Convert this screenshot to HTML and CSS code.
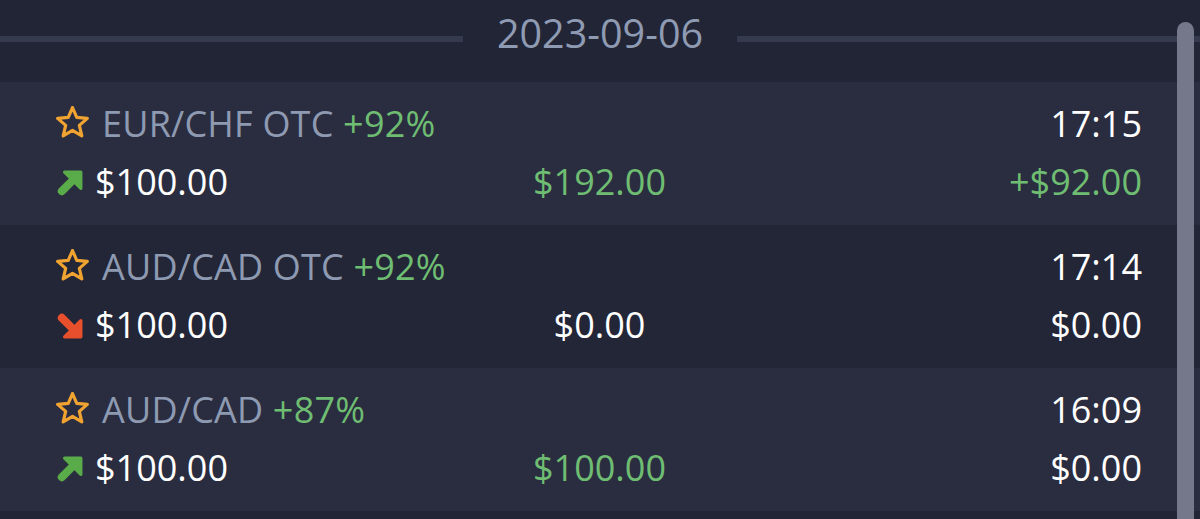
FILE: index.html
```html
<!DOCTYPE html>
<html>
<head>
<meta charset="utf-8">
<link rel="stylesheet" href="styles.css">
</head>
<body>
<div class="screen">
  <div class="date-head">
    <span class="rule"></span>
    <span class="date">2023-09-06</span>
    <span class="rule"></span>
  </div>

  <div class="trade light">
    <div class="line">
      <div class="name"><svg class="star" viewBox="2 2 28 27"><path d="M16 3.2 L19.6 11.6 L28.6 12.4 L21.8 18.4 L23.9 27.3 L16 22.6 L8.1 27.3 L10.2 18.4 L3.4 12.4 L12.4 11.6 Z"/></svg><span class="pair">EUR/CHF OTC</span> <span class="pct">+92%</span></div>
      <div></div>
      <div class="time">17:15</div>
    </div>
    <div class="line">
      <div class="amount"><svg class="dir up" viewBox="0 0 24 24"><path class="head" d="M7 2 H22 V17 Z"/><path class="shaft" d="M15 9 L4.5 19.5"/></svg>$100.00</div>
      <div class="mid green">$192.00</div>
      <div class="profit green">+$92.00</div>
    </div>
  </div>

  <div class="trade dark">
    <div class="line">
      <div class="name"><svg class="star" viewBox="2 2 28 27"><path d="M16 3.2 L19.6 11.6 L28.6 12.4 L21.8 18.4 L23.9 27.3 L16 22.6 L8.1 27.3 L10.2 18.4 L3.4 12.4 L12.4 11.6 Z"/></svg><span class="pair">AUD/CAD OTC</span> <span class="pct">+92%</span></div>
      <div></div>
      <div class="time">17:14</div>
    </div>
    <div class="line">
      <div class="amount"><svg class="dir down" viewBox="0 0 24 24"><path class="head" d="M7 22 H22 V7 Z"/><path class="shaft" d="M15 15 L4.5 4.5"/></svg>$100.00</div>
      <div class="mid">$0.00</div>
      <div class="profit">$0.00</div>
    </div>
  </div>

  <div class="trade light">
    <div class="line">
      <div class="name"><svg class="star" viewBox="2 2 28 27"><path d="M16 3.2 L19.6 11.6 L28.6 12.4 L21.8 18.4 L23.9 27.3 L16 22.6 L8.1 27.3 L10.2 18.4 L3.4 12.4 L12.4 11.6 Z"/></svg><span class="pair">AUD/CAD</span> <span class="pct">+87%</span></div>
      <div></div>
      <div class="time">16:09</div>
    </div>
    <div class="line">
      <div class="amount"><svg class="dir up" viewBox="0 0 24 24"><path class="head" d="M7 2 H22 V17 Z"/><path class="shaft" d="M15 9 L4.5 19.5"/></svg>$100.00</div>
      <div class="mid green">$100.00</div>
      <div class="profit">$0.00</div>
    </div>
  </div>

  <div class="scrollbar"></div>
</div>
</body>
</html>
```

FILE: styles.css
```css
* { box-sizing: border-box; }
html, body {
  margin: 0;
  padding: 0;
  background: #222535;
}
.screen {
  position: relative;
  width: 1200px;
  height: 519px;
  overflow: hidden;
  background: #222535;
  font-family: "Open Sans", "Noto Sans", sans-serif;
  color: #ffffff;
}
.date-head {
  height: 82px;
  display: flex;
  align-items: flex-start;
  gap: 34px;
  padding-top: 11px;
}
.rule {
  flex: 1;
  height: 6px;
  margin-top: 25px;
  background: #353a4e;
}
.date {
  font-size: 39.5px;
  line-height: 44px;
  color: #8f9bb3;
}
.trade {
  padding: 13px 58px 14px 57px;
}
.trade.light { background: #2a2d40; }
.trade.dark { background: #232637; }
.line {
  display: grid;
  grid-template-columns: 1fr 1fr 1fr;
  align-items: center;
  height: 58px;
  font-size: 36px;
  line-height: 58px;
  white-space: nowrap;
}
.name {
  white-space: nowrap;
  letter-spacing: 0.2px;
}
.star {
  display: inline-block;
  vertical-align: middle;
  width: 33px;
  height: 32px;
  margin-left: -1px;
  margin-right: 13px;
  margin-top: -10px;
  fill: none;
  stroke: #f0a331;
  stroke-width: 2.7;
  stroke-linejoin: round;
}
.pair { color: #8e9ab2; }
.pct { color: #6fbd72; }
.time, .profit { text-align: right; }
.mid { text-align: center; }
.green { color: #6fbd72; }
.amount {
  display: flex;
  align-items: center;
}
.dir {
  width: 26px;
  height: 26px;
  margin-right: 12px;
  margin-left: 0;
  margin-top: 2px;
}
.dir .head { stroke-width: 3; stroke-linejoin: round; }
.dir .shaft { fill: none; stroke-width: 7.5; stroke-linecap: round; }
.dir.up .head { fill: #5aab4a; stroke: #5aab4a; }
.dir.up .shaft { stroke: #5aab4a; }
.dir.down .head { fill: #e8502d; stroke: #e8502d; }
.dir.down .shaft { stroke: #e8502d; }
.scrollbar {
  position: absolute;
  left: 1177px;
  top: 22px;
  width: 17px;
  height: 520px;
  border-radius: 9px;
  background: #75778a;
}
```
